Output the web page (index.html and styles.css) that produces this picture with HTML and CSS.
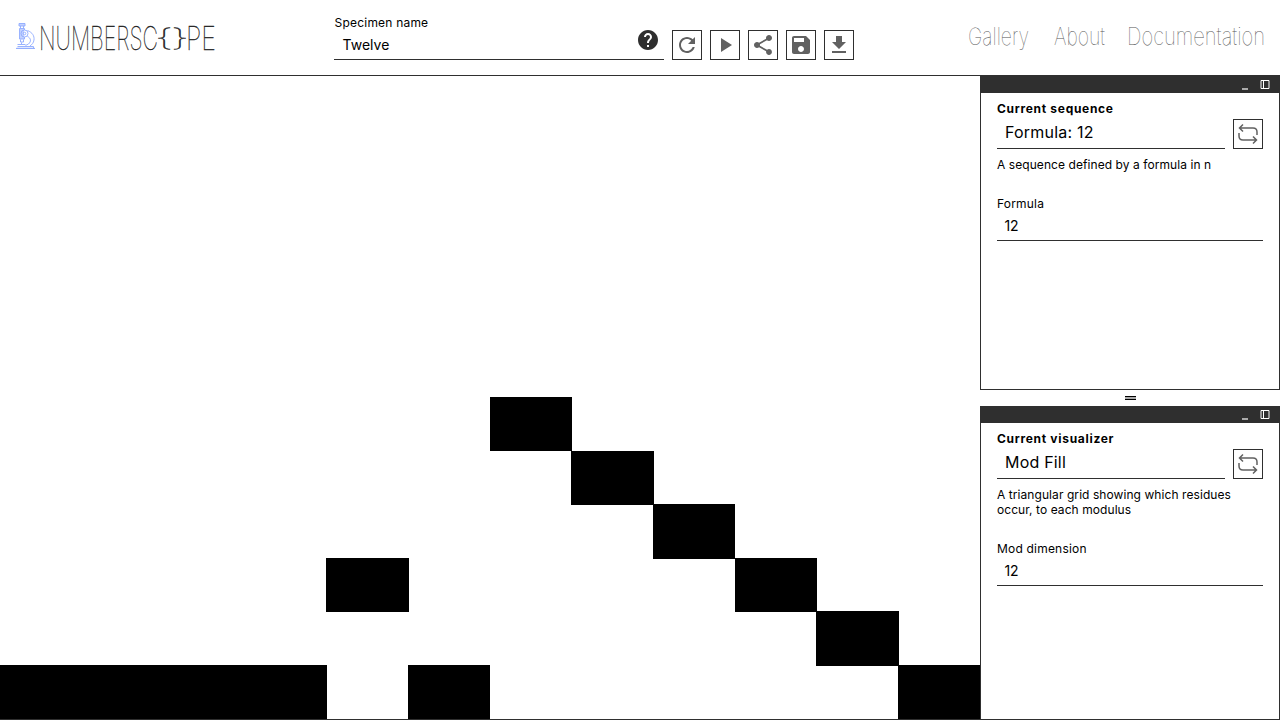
FILE: index.html
```html
<!DOCTYPE html>
<html lang="en">
<head>
<meta charset="utf-8">
<title>Numberscope</title>
<link rel="stylesheet" href="styles.css">
</head>
<body>
<header class="navbar">
  <a class="brand">
    <svg width="208" height="44" viewBox="12 14 208 44">
      <g class="scope">
        <path class="tint" d="M19 23.500h6v2.500h-6zM20 29h4v10h-4zM16.500 47.500h18v1.500h-18z"/>
        <path d="M19 23.500h6v2.500h-6zM20.500 26v2.500M23.500 26v2.500M19.500 28.500h5v1.500M19.500 28.500v10.500h5v-2M20.500 39.500v2.500h3v-2.500M21.500 42.500v1.500M17.500 44.500h8M17.500 46.500h16v2M16 48.500h19M27.500 30.500c5 2 7 5.500 6.500 9.500c-.5 3-2 4.500-4 6M27.500 36.500c3.500 1.500 4 5 1 7.500l-3 1.500"/>
        <circle cx="24.500" cy="33.500" r="3.500"/><circle cx="24.500" cy="33.500" r="1.300"/>
      </g>
      <text class="wordmark" x="39" y="49.500" textLength="119" lengthAdjust="spacingAndGlyphs">NUMBERSC</text>
      <text class="wordmark brace" x="154.500" y="45.500" textLength="19" lengthAdjust="spacingAndGlyphs">{</text>
      <text class="wordmark brace" x="170.500" y="45.500" textLength="19" lengthAdjust="spacingAndGlyphs">}</text>
      <text class="wordmark" x="186" y="49.500" textLength="30" lengthAdjust="spacingAndGlyphs">PE</text>
    </svg>
  </a>
  <div class="specimen">
    <div class="field name-field">
      <label>Specimen name</label>
      <div class="value">Twelve</div>
    </div>
    <svg class="help" width="24" height="24" viewBox="0 0 24 24"><path d="M12 2C6.480 2 2 6.480 2 12s4.480 10 10 10 10-4.480 10-10S17.520 2 12 2zm1 17h-2v-2h2v2zm2.070-7.750l-.9.920C13.450 12.900 13 13.500 13 15h-2v-.5c0-1.100.450-2.100 1.170-2.830l1.240-1.260c.37-.36.590-.86.590-1.410 0-1.100-.9-2-2-2s-2 .9-2 2H8c0-2.210 1.790-4 4-4s4 1.790 4 4c0 .88-.36 1.680-.93 2.250z"/></svg>
  </div>
  <div class="tools">
    <button class="tool"><svg viewBox="0 0 24 24"><path d="M17.650 6.350C16.200 4.900 14.210 4 12 4c-4.420 0-7.990 3.580-7.990 8s3.570 8 7.990 8c3.730 0 6.840-2.550 7.730-6h-2.080c-.82 2.330-3.040 4-5.650 4-3.310 0-6-2.690-6-6s2.690-6 6-6c1.660 0 3.140.69 4.220 1.780L13 11h7V4l-2.350 2.350z"/></svg></button>
    <button class="tool"><svg viewBox="0 0 24 24"><path d="M8 5v14l11-7z"/></svg></button>
    <button class="tool"><svg viewBox="0 0 24 24"><path d="M18 16.080c-.76 0-1.440.3-1.960.77L8.910 12.700c.05-.23.090-.46.090-.7s-.04-.47-.09-.7l7.050-4.110c.54.5 1.250.81 2.040.81 1.660 0 3-1.340 3-3s-1.340-3-3-3-3 1.340-3 3c0 .24.040.47.090.7L8.040 9.810C7.500 9.310 6.790 9 6 9c-1.660 0-3 1.340-3 3s1.340 3 3 3c.79 0 1.500-.31 2.040-.81l7.120 4.160c-.05.21-.08.43-.08.650 0 1.610 1.310 2.920 2.920 2.920s2.920-1.310 2.920-2.920-1.310-2.920-2.920-2.920z"/></svg></button>
    <button class="tool"><svg viewBox="0 0 24 24"><path d="M17 3H5c-1.110 0-2 .9-2 2v14c0 1.100.890 2 2 2h14c1.100 0 2-.9 2-2V7l-4-4zm-5 16c-1.660 0-3-1.340-3-3s1.340-3 3-3 3 1.340 3 3-1.340 3-3 3zm3-10H5V5h10v4z"/></svg></button>
    <button class="tool"><svg viewBox="0 0 24 24"><path d="M19 9h-4V3H9v6H5l7 7 7-7zM5 18v2h14v-2H5z"/></svg></button>
  </div>
  <nav class="links">
    <svg width="306" height="40" viewBox="964 18 306 40">
      <text x="968" y="45" textLength="61" lengthAdjust="spacingAndGlyphs">Gallery</text>
      <text x="1054" y="45" textLength="51" lengthAdjust="spacingAndGlyphs">About</text>
      <text x="1127" y="45" textLength="138" lengthAdjust="spacingAndGlyphs">Documentation</text>
    </svg>
  </nav>
</header>
<main class="workspace">
  <svg class="canvas" width="980" height="643" viewBox="0 76 980 643" shape-rendering="crispEdges">
    <rect x="0" y="665" width="327" height="54"/>
    <rect x="326" y="558" width="83" height="54"/>
    <rect x="408" y="665" width="82" height="54"/>
    <rect x="490" y="397" width="82" height="54"/>
    <rect x="571" y="451" width="83" height="54"/>
    <rect x="653" y="504" width="82" height="55"/>
    <rect x="735" y="558" width="82" height="54"/>
    <rect x="816" y="611" width="83" height="55"/>
    <rect x="898" y="665" width="82" height="54"/>
  </svg>
  <aside class="tabs">
    <section class="panel sequence">
      <div class="titlebar"><i class="minimize"></i><svg width="10" height="9"><path d="M1 .5h8v8h-8zM3.500 .5v8"/></svg></div>
      <div class="body">
        <h2>Current sequence</h2>
        <div class="switch-row"><div class="current">Formula: 12</div>
          <button class="tool"><svg class="swap" viewBox="0 0 28 28"><path d="M9 4.500L5.500 8 9 11.500M5.500 8H19q4 0 4 4v3M19 16.500l3.500 3.500-3.500 3.500M22.500 20H9q-4 0-4-4v-3"/></svg></button></div>
        <p>A sequence defined by a formula in n</p>
        <div class="field"><label>Formula</label><div class="value">12</div></div>
      </div>
    </section>
    <div class="divider"><i></i></div>
    <section class="panel visualizer">
      <div class="titlebar"><i class="minimize"></i><svg width="10" height="9"><path d="M1 .5h8v8h-8zM3.500 .5v8"/></svg></div>
      <div class="body">
        <h2>Current visualizer</h2>
        <div class="switch-row"><div class="current">Mod Fill</div>
          <button class="tool"><svg class="swap" viewBox="0 0 28 28"><path d="M9 4.500L5.500 8 9 11.500M5.500 8H19q4 0 4 4v3M19 16.500l3.500 3.500-3.500 3.500M22.500 20H9q-4 0-4-4v-3"/></svg></button></div>
        <p>A triangular grid showing which residues<br>occur, to each modulus</p>
        <div class="field"><label>Mod dimension</label><div class="value">12</div></div>
      </div>
    </section>
  </aside>
</main>
</body>
</html>
```
FILE: styles.css
```css
* { box-sizing: border-box; }
body { margin: 0; width: 1280px; height: 720px; overflow: hidden; background: #fff; color: #000; font-family: Inter, sans-serif; font-size: 12px; display: flex; flex-direction: column; }
svg { display: block; }
.navbar { height: 76px; flex: none; border-bottom: 1px solid #2f2f2f; display: flex; align-items: flex-start; }
.brand { margin: 14px 0 0 12px; }
.scope { fill: none; stroke: #8eaaff; stroke-width: .9; }
.scope .tint { fill: #c3d2ff; stroke: none; }
.wordmark { font: 100 32.5px Inter, sans-serif; fill: #222; stroke: #222; stroke-width: .3px; }
.brace { font-size: 24px; }
.specimen { width: 330px; height: 60px; margin-left: 114px; padding-top: 15px; border-bottom: 1px solid #2f2f2f; display: flex; justify-content: space-between; }
.help { margin: 13px 4px 0 0; fill: #2f2f2f; }
.field { display: flex; flex-direction: column; border-bottom: 1px solid #2f2f2f; height: 45px; }
.field label { line-height: 15px; letter-spacing: .2px; }
.value { font-size: 14px; line-height: 17px; padding: 6px 7.6px; letter-spacing: -.3px; }
.name-field { border: 0; padding-left: .6px; }
.name-field .value { padding-left: 8px; letter-spacing: 0; }
.tools { display: flex; gap: 8px; margin: 30px 0 0 8px; }
.tool { width: 30px; height: 30px; flex: none; padding: 0; border: 1px solid #2f2f2f; background: #fff; display: grid; place-items: center; }
.tool svg { width: 24px; height: 24px; fill: #616161; }
.tool .swap { width: 28px; height: 28px; fill: none; stroke: #616161; stroke-width: 1.5; }
.links { margin: 18px 10px 0 auto; font: 100 24px Inter, sans-serif; fill: #555; }
.workspace { display: flex; height: 644px; border-bottom: 1px solid #2f2f2f; }
.tabs { width: 300px; margin-top: -1px; display: flex; flex-direction: column; }
.panel { border: 1px solid #2f2f2f; }
.sequence { height: 315px; }
.visualizer { height: 313px; border-bottom: 0; }
.titlebar { height: 17px; background: #2f2f2f; display: flex; justify-content: flex-end; align-items: flex-start; gap: 12px; padding: 4px 9px 0 0; }
.visualizer .titlebar { height: 16px; padding-top: 3px; }
.titlebar svg { fill: none; stroke: #fff; }
.minimize { width: 6px; height: 2px; margin-top: 8px; background: #aaa; }
.body { padding: 8px 16px; }
.body h2 { margin: 0; font-size: 12px; line-height: 15px; font-weight: 700; letter-spacing: .7px; }
.switch-row { display: flex; gap: 8px; margin-top: 3px; }
.current { flex: 1; font-size: 16px; line-height: 19px; height: 30px; padding: 4px 8px; border-bottom: 1px solid #2f2f2f; letter-spacing: .2px; }
.body p { margin: 8px 0 24px; line-height: 15px; letter-spacing: .07px; white-space: nowrap; }
.divider { height: 17px; padding-bottom: 1px; display: grid; place-items: center; }
.divider i { width: 11px; height: 4px; background: #aaa; border: solid #000; border-width: 1px 0; }
```
